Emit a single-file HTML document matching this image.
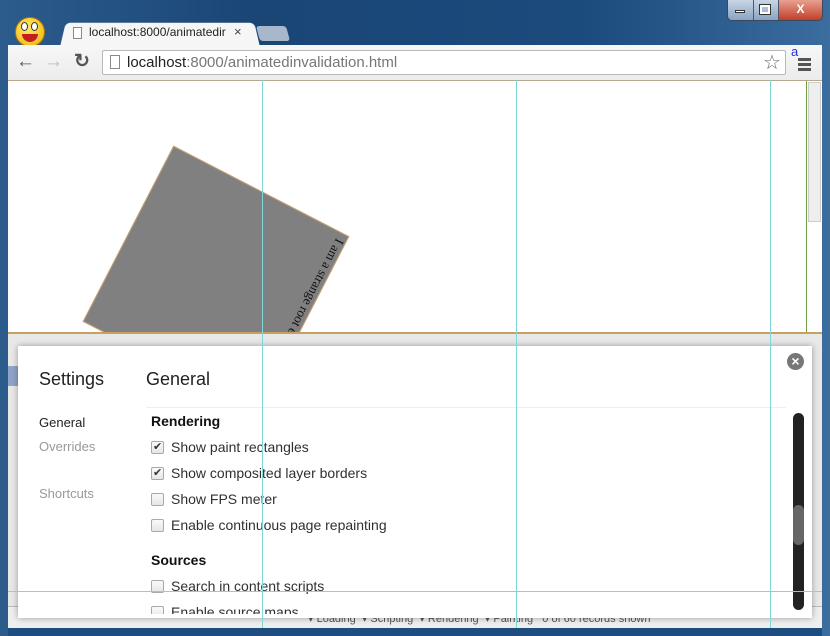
<!DOCTYPE html>
<html><head><style>
*{margin:0;padding:0;box-sizing:border-box}
body{width:830px;height:636px;overflow:hidden;position:relative;font-family:"Liberation Sans",sans-serif;background:#1a4a7a}
.a{position:absolute}
.frame{left:0;top:0;width:830px;height:636px;background:linear-gradient(90deg,#2c5c8c 0%,#1a4676 30%,#1b4a7c 70%,#3b6d9e 100%)}
.cb{position:absolute;width:13px;height:13px;border:1px solid #a9a9a9;border-radius:2px;background:linear-gradient(#fafafa,#e6e6e6)}
.cb.on::after{content:"✔";position:absolute;left:1px;top:-2px;font-size:11px;color:#333}
.lbl{position:absolute;font-size:14px;color:#303030}
.vl{position:absolute;top:80px;width:1px;height:548px;background:#7fd6d6}
</style></head><body>
<div class="a frame"></div>
<div class="a" style="left:727px;top:0;width:96px;height:21px;border:1px solid #3a4a5c;border-top:none;border-radius:0 0 5px 5px;overflow:hidden;display:flex">
<div style="width:26px;background:linear-gradient(#c8d6e6,#8aa4c2);border-right:1px solid #556"></div>
<div style="width:25px;background:linear-gradient(#c8d6e6,#8aa4c2);border-right:1px solid #556"></div>
<div style="flex:1;background:linear-gradient(#e8a090,#c0402a);color:#fff;font-size:12px;font-weight:bold;text-align:center;line-height:19px">X</div>
</div>
<div class="a" style="left:735px;top:10px;width:10px;height:3px;background:#fff;border:1px solid #333"></div>
<div class="a" style="left:760px;top:5px;width:10px;height:9px;border:2px solid #fff;outline:1px solid #333"></div>
<div class="a" style="left:15px;top:17px;width:30px;height:30px;border-radius:50%;background:radial-gradient(circle at 40% 35%,#ffe96a,#f2b000);border:1px solid #b07800"></div>
<div class="a" style="left:21px;top:22px;width:7px;height:9px;border-radius:50%;background:#fff;border:1px solid #333"></div>
<div class="a" style="left:31px;top:22px;width:7px;height:9px;border-radius:50%;background:#fff;border:1px solid #333"></div>
<div class="a" style="left:22px;top:34px;width:16px;height:8px;border-radius:0 0 8px 8px;background:#c02020"></div>
<div class="a" style="left:60px;top:21px;width:200px;height:26px;background:#f6f6f6;border-radius:5px 5px 0 0;transform:perspective(60px) rotateX(8deg);transform-origin:bottom"></div>
<div class="a" style="left:73px;top:27px;width:9px;height:12px;border:1px solid #888;background:#fff"></div>
<div class="a" style="left:89px;top:25px;font-size:12px;color:#222;white-space:nowrap;width:140px;overflow:hidden">localhost:8000/animatedir</div>
<div class="a" style="left:234px;top:24px;font-size:13px;color:#444">×</div>
<div class="a" style="left:258px;top:26px;width:30px;height:15px;background:#a8b8cc;border-radius:3px;transform:skewX(15deg)"></div>
<div class="a" style="left:8px;top:45px;width:814px;height:36px;background:linear-gradient(#f7f7f7,#ececec);border-bottom:1px solid #b8a890"></div>
<div class="a" style="left:16px;top:51px;font-size:19px;color:#555;font-weight:bold">←</div>
<div class="a" style="left:44px;top:51px;font-size:19px;color:#bbb;font-weight:bold">→</div>
<div class="a" style="left:74px;top:50px;font-size:19px;color:#555;font-weight:bold">↻</div>
<div class="a" style="left:102px;top:50px;width:684px;height:25px;background:#fff;border:1px solid #b8b8b8;border-radius:2px"></div>
<div class="a" style="left:110px;top:55px;width:10px;height:14px;border:1px solid #888"></div>
<div class="a" style="left:127px;top:54px;font-size:15px;color:#222;white-space:nowrap">localhost<span style="color:#777">:8000/animatedinvalidation.html</span></div>
<div class="a" style="left:763px;top:50px;font-size:20px;color:#666">☆</div>
<div class="a" style="left:791px;top:44px;font-size:13px;color:#2030e0">a</div>
<div class="a" style="left:798px;top:58px;width:13px;height:3px;background:#555;box-shadow:0 5px #555,0 10px #555"></div>
<div class="a" style="left:8px;top:81px;width:814px;height:251px;background:#fff"></div>
<div class="a" style="left:806px;top:81px;width:1px;height:251px;background:#6fa040"></div>
<div class="a" style="left:808px;top:82px;width:13px;height:140px;background:#eee;border:1px solid #ccc"></div>
<div class="a" style="left:8px;top:81px;width:800px;height:251px;overflow:hidden">
<div class="a" style="left:109px;top:99px;width:198px;height:198px;background:#808080;border:1px solid #c8a070;transform:rotate(27.3deg);">
<div style="position:absolute;right:-2px;top:6px;writing-mode:vertical-rl;font-family:'Liberation Serif',serif;font-size:13px;color:#111">I am a strange root element</div>
</div></div>
<div class="a" style="left:8px;top:332px;width:814px;height:296px;background:#e8e8e8;border-top:2px solid #c8a060"></div>
<div class="a" style="left:8px;top:366px;width:12px;height:20px;background:#8fa4c8"></div>
<div class="a" style="left:8px;top:606px;width:814px;height:22px;background:#eee;border-top:1px solid #bbb;font-size:11px;color:#555;white-space:nowrap;padding:5px 0 0 300px">▾ Loading &nbsp;▾ Scripting &nbsp;▾ Rendering &nbsp;▾ Painting &nbsp; 0 of 60 records shown</div>
<div class="a" style="left:8px;top:628px;width:814px;height:8px;background:#1e4e80"></div>
<div class="a" style="left:18px;top:346px;width:794px;height:272px;background:#fff;box-shadow:0 0 6px rgba(0,0,0,.35)"></div>
<div class="a" style="left:39px;top:369px;font-size:18px;color:#222">Settings</div>
<div class="a" style="left:146px;top:369px;font-size:18px;color:#222">General</div>
<div class="a" style="left:787px;top:353px;width:17px;height:17px;border-radius:50%;background:#777;color:#fff;font-size:14px;font-weight:bold;text-align:center;line-height:17px">×</div>
<div class="a" style="left:146px;top:407px;width:640px;height:1px;background:#eee"></div>
<div class="a" style="left:39px;top:415px;font-size:13px;color:#222">General</div>
<div class="a" style="left:39px;top:439px;font-size:13px;color:#999">Overrides</div>
<div class="a" style="left:39px;top:486px;font-size:13px;color:#999">Shortcuts</div>
<div class="a" style="left:151px;top:413px;font-size:14px;font-weight:bold;color:#111">Rendering</div>
<div class="cb on" style="left:151px;top:441px"></div><div class="lbl" style="left:171px;top:439px">Show paint rectangles</div>
<div class="cb on" style="left:151px;top:467px"></div><div class="lbl" style="left:171px;top:465px">Show composited layer borders</div>
<div class="cb" style="left:151px;top:493px"></div><div class="lbl" style="left:171px;top:491px">Show FPS meter</div>
<div class="cb" style="left:151px;top:519px"></div><div class="lbl" style="left:171px;top:517px">Enable continuous page repainting</div>
<div class="a" style="left:151px;top:552px;font-size:14px;font-weight:bold;color:#111">Sources</div>
<div class="cb" style="left:151px;top:580px"></div><div class="lbl" style="left:171px;top:578px">Search in content scripts</div>
<div class="a" style="left:18px;top:604px;width:794px;height:10px;overflow:hidden"><div class="cb" style="left:133px;top:2px"></div><div class="lbl" style="left:153px;top:0">Enable source maps</div></div>
<div class="a" style="left:793px;top:413px;width:11px;height:197px;background:#222;border-radius:6px"></div>
<div class="a" style="left:793px;top:505px;width:11px;height:40px;background:#666;border-radius:6px"></div>
<div class="vl" style="left:262px"></div>
<div class="vl" style="left:516px"></div>
<div class="vl" style="left:770px"></div>
<div class="a" style="left:8px;top:591px;width:814px;height:1px;background:#7fd6d6"></div>
</body></html>
